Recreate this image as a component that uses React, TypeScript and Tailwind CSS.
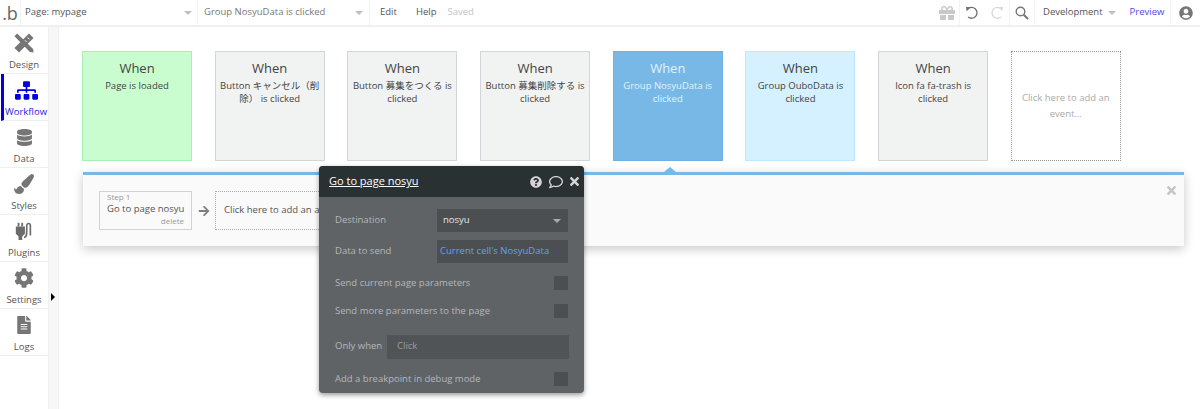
import type { ReactNode } from "react";
import {
  FaArrowRight,
  FaCog,
  FaDatabase,
  FaFileAlt,
  FaGift,
  FaPaintBrush,
  FaQuestionCircle,
  FaRegComment,
  FaSitemap,
  FaTimes,
  FaUserCircle,
} from "react-icons/fa";

const font = "font-['Open_Sans','Noto_Sans_CJK_JP',sans-serif]";

const DesignIcon = () => (
  <svg width="20" height="22" viewBox="0 0 22 22" fill="#767676">
    <path d="M3.5 0.5 L21 17.5 L21.5 21.5 L17.5 21 L0.5 3.5 Z" />
    <path d="M16.5 0.5 L21.5 5.5 L5.5 21.5 L0.5 16.5 Z" />
    <path d="M15 5 L17 7 M12 8 L14 10" stroke="#fff" strokeWidth="1" />
  </svg>
);

const PluginIcon = () => (
  <svg width="20" height="20" viewBox="0 0 20 22" fill="none">
    <path d="M1 6 H11 V14 L8 17 V21 H4 V17 L1 14 Z" fill="#6b6b6b" />
    <rect x="3" y="2" width="2" height="4" fill="#6b6b6b" />
    <rect x="7" y="2" width="2" height="4" fill="#6b6b6b" />
    <path d="M10 18 C13 18 13 15 13 11 V5 C13 2 17 2 17 5 V16" stroke="#6b6b6b" strokeWidth="1.8" />
  </svg>
);

const UndoIcon = ({ color, flip }: { color: string; flip?: boolean }) => (
  <svg width="14" height="14" viewBox="0 0 16 16" fill="none" className={flip ? "-scale-x-100" : ""}>
    <path d="M3 3.5 A6.2 6.2 0 1 1 3.5 12.5" stroke={color} strokeWidth="1.5" />
    <path d="M1 1 L6 1.5 L2 6 Z" fill={color} />
  </svg>
);

const SearchIcon = () => (
  <svg width="14" height="14" viewBox="0 0 14 14" fill="none" stroke="#777">
    <circle cx="5.5" cy="5.5" r="4.3" strokeWidth="1.4" />
    <path d="M8.7 8.7 L13 13" strokeWidth="2" />
  </svg>
);

const Caret = ({ className }: { className: string }) => (
  <span className={`w-0 h-0 border-x-[4px] border-x-transparent border-t-[4px] ${className}`} />
);

const tools: { label: string; icon: ReactNode; active?: boolean }[] = [
  { label: "Design", icon: <DesignIcon /> },
  { label: "Workflow", icon: <FaSitemap size={23} color="#0000e0" />, active: true },
  { label: "Data", icon: <FaDatabase size={17} color="#767676" /> },
  { label: "Styles", icon: <FaPaintBrush size={20} color="#767676" /> },
  { label: "Plugins", icon: <PluginIcon /> },
  { label: "Settings", icon: <FaCog size={20} color="#767676" /> },
  { label: "Logs", icon: <FaFileAlt size={18} color="#767676" /> },
];

const events = [
  { text: "Page is loaded", style: "bg-[#c9fdd0] border-[#a8efb4] text-[#444]" },
  { text: "Button キャンセル（削除） is clicked", style: "bg-[#f1f2f2] border-[#d3d6d9] text-[#444]" },
  { text: "Button 募集をつくる is clicked", style: "bg-[#f1f2f2] border-[#d3d6d9] text-[#444]" },
  { text: "Button 募集削除する is clicked", style: "bg-[#f1f2f2] border-[#d3d6d9] text-[#444]" },
  { text: "Group NosyuData is clicked", style: "bg-[#77b8e6] border-[#6fb2e2] text-[#e4f2fb]" },
  { text: "Group OuboData is clicked", style: "bg-[#d5f0fe] border-[#bfe7fd] text-[#444]" },
  { text: "Icon fa fa-trash is clicked", style: "bg-[#f1f2f2] border-[#d3d6d9] text-[#444]" },
];

const CheckRow = ({ label, className }: { label: string; className: string }) => (
  <div className={`flex items-center justify-between pl-[16px] pr-[16px] ${className}`}>
    <span className="text-[9.5px] text-[#b4b8ba]">{label}</span>
    <span className="w-[14px] h-[14px] bg-[#4b4f52] rounded-[1px]" />
  </div>
);

export default function App() {
  return (
    <div className={`${font} relative w-[1200px] h-[409px] overflow-hidden bg-white`}>
      <header className="h-[27px] flex items-center border-b-2 border-[#f0f0f0] text-[9.5px] text-[#555]">
        <div className="w-[21px] h-full flex items-center justify-center border-r border-[#f3f3f3] text-[#666] text-[18px] leading-none">
          .b
        </div>
        <div className="w-[177px] h-full flex items-center justify-between pl-[4px] pr-[5px] border-r border-[#f3f3f3]">
          <span>Page: mypage</span>
          <Caret className="border-t-[#c0c0c0]" />
        </div>
        <div className="w-[172px] h-full flex items-center justify-between pl-[6px] pr-[6px] border-r border-[#f3f3f3] text-[#777]">
          <span>Group NosyuData is clicked</span>
          <Caret className="border-t-[#c0c0c0]" />
        </div>
        <span className="ml-[10px]">Edit</span>
        <span className="ml-[19px]">Help</span>
        <span className="ml-[11px] text-[#c4c4c4]">Saved</span>
        <div className="ml-auto flex items-center h-full">
          <div className="w-[21px] h-full flex items-center justify-start border-r border-[#f3f3f3]">
            <FaGift size={16} color="#c8c8c8" />
          </div>
          <div className="w-[50px] h-full flex items-center justify-center gap-[11px] border-r border-[#f3f3f3]">
            <UndoIcon color="#6e6e6e" />
            <UndoIcon color="#d8d8d8" flip />
          </div>
          <div className="w-[25px] h-full flex items-center justify-center border-r border-[#f3f3f3]">
            <SearchIcon />
          </div>
          <div className="w-[136px] h-full flex items-center pl-[8px] border-r border-[#f3f3f3]">
            <span>Development</span>
            <Caret className="ml-[5px] border-t-[#c0c0c0]" />
            <span className="ml-[14px] text-[#4a4ae6]">Preview</span>
          </div>
          <div className="w-[29px] h-full flex items-center justify-center">
            <FaUserCircle size={14} color="#777" />
          </div>
        </div>
      </header>

      <div className="flex h-[382px]">
        <nav className="w-[48px] shrink-0">
          {tools.map((tool) => (
            <div
              key={tool.label}
              className={`h-[47px] flex flex-col items-center justify-end pb-[1px] border-b border-[#efefef] ${
                tool.active ? "border-l-[3px] border-l-[#0000e0] ml-[1px] text-[#2222dd]" : "text-[#555]"
              }`}
            >
              <div className="h-[28px] flex items-center justify-center">{tool.icon}</div>
              <span className="text-[9.5px] leading-[14px] mt-[1px]">{tool.label}</span>
            </div>
          ))}
        </nav>

        <div className="relative w-[11px] shrink-0 bg-[#f7f7f7] border-x border-[#f0f0f0]">
          <span className="absolute left-[2px] top-[266px] w-0 h-0 border-y-[4px] border-y-transparent border-l-[4px] border-l-black" />
        </div>

        <main className="flex-1 min-w-0 flex flex-col">
          <div className="flex gap-[22.7px] pl-[23px] pt-[24px]">
            {events.map((ev) => (
              <div
                key={ev.text}
                className={`relative w-[110px] h-[110px] shrink-0 border px-[4px] text-center ${ev.style}`}
              >
                <div className="text-[13px] leading-[20px] mt-[6px]">When</div>
                <div className="text-[9.5px] leading-[12.5px] mt-[2px]">{ev.text}</div>
              </div>
            ))}
            <div className="w-[110px] h-[110px] shrink-0 border border-dotted border-[#999] flex items-center justify-center text-center text-[9.5px] leading-[16px] text-[#aaa] px-[8px]">
              Click here to add an event...
            </div>
          </div>

          <div className="relative ml-[24px] mt-[11px] w-[1101px] h-[74px] bg-[#fafafa] border-t-[3px] border-[#77b8e6] shadow-[0_3px_10px_rgba(0,0,0,0.22)] flex items-start pl-[16px] pt-[16px]">
            <span className="absolute left-[581px] -top-[8px] w-0 h-0 border-x-[6px] border-x-transparent border-b-[5px] border-b-[#77b8e6]" />
            <div className="w-[93px] h-[39px] border border-[#d0d3d5] px-[7px] text-[#555]">
              <div className="text-[8px] leading-[10px] text-[#999]">Step 1</div>
              <div className="text-[9.5px] leading-[14px] whitespace-nowrap">Go to page nosyu</div>
              <div className="text-[8px] leading-[10px] text-right text-[#999]">delete</div>
            </div>
            <div className="w-[23px] h-[39px] flex items-center justify-center">
              <FaArrowRight size={12} color="#808080" />
            </div>
            <div className="w-[240px] h-[39px] border border-dotted border-[#aaa] flex items-center pl-[8px] text-[9.5px] text-[#555]">
              Click here to add an action...
            </div>
            <FaTimes size={13} color="#c2c6c8" className="absolute right-[6px] top-[9px]" />
          </div>
        </main>
      </div>

      <section className="absolute left-[319px] top-[166px] w-[265px] h-[227px] rounded-[4px] overflow-hidden bg-[#5f6366] shadow-[0_2px_5px_rgba(0,0,0,0.4)]">
        <div className="h-[31px] bg-[#2a3133] flex items-center pl-[10px] pr-[3px] text-white">
          <span className="text-[11px] underline">Go to page nosyu</span>
          <FaQuestionCircle size={12} color="#d5d5d5" className="ml-auto" />
          <FaRegComment size={14} color="#d5d5d5" className="ml-[7px]" />
          <FaTimes size={13} color="#d5d5d5" className="ml-[5px]" />
        </div>
        <div className="flex items-center pl-[16px] mt-[12px]">
          <span className="w-[102px] text-[9.5px] text-[#b4b8ba]">Destination</span>
          <div className="w-[131px] h-[23px] bg-[#4b4f52] flex items-center justify-between pl-[6px] pr-[7px] text-[9.5px] text-[#e6e6e6]">
            <span>nosyu</span>
            <Caret className="border-t-[#aaa]" />
          </div>
        </div>
        <div className="flex items-center pl-[16px] mt-[8px]">
          <span className="w-[102px] text-[9.5px] text-[#b4b8ba]">Data to send</span>
          <div className="w-[131px] h-[23px] bg-[#4b4f52] flex items-center pl-[3px] text-[9.5px] text-[#5aa4f2]">
            Current cell's NosyuData
          </div>
        </div>
        <CheckRow label="Send current page parameters" className="mt-[13px]" />
        <CheckRow label="Send more parameters to the page" className="mt-[14px]" />
        <div className="flex items-center pl-[16px] mt-[16px]">
          <span className="w-[52px] text-[9.5px] text-[#b4b8ba]">Only when</span>
          <div className="w-[182px] h-[24px] bg-[#505457] flex items-center pl-[10px] text-[9.5px] text-[#9a9ea0]">
            Click
          </div>
        </div>
        <CheckRow label="Add a breakpoint in debug mode" className="mt-[13px]" />
      </section>
    </div>
  );
}
